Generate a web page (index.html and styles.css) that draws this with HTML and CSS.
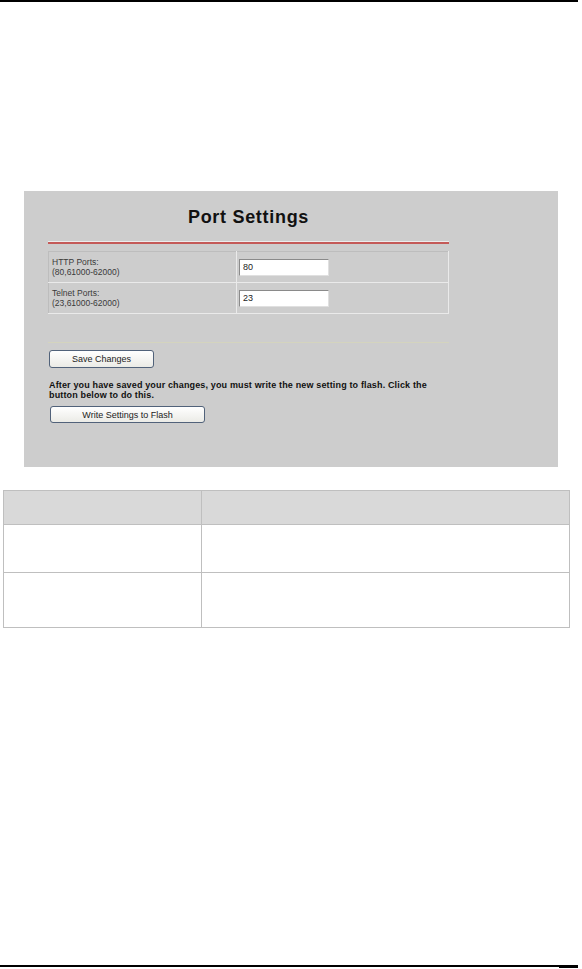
FILE: index.html
```html
<!DOCTYPE html>
<html>
<head>
    <meta charset="UTF-8">
    <meta name="viewport" content="width=device-width, initial-scale=1.0">
    <title>Port Settings</title>
    <link rel="stylesheet" href="styles.css">
</head>
<body>
    <div class="top-rule"></div>

    <div class="shot">
        <div class="panel">
            <h2 class="shot-title">Port Settings</h2>
            <div class="red-rule"></div>

            <table class="port-table">
                <tr>
                    <td class="port-label">HTTP Ports:<br>(80,61000-62000)</td>
                    <td class="port-value"><input class="port-input" type="text" value="80"></td>
                </tr>
                <tr>
                    <td class="port-label">Telnet Ports:<br>(23,61000-62000)</td>
                    <td class="port-value"><input class="port-input" type="text" value="23"></td>
                </tr>
            </table>

            <div class="thin-rule"></div>

            <button class="xp-btn save-btn" type="button">Save Changes</button>
            <p class="flash-note">After you have saved your changes, you must write the new setting to flash. Click the button below to do this.</p>
            <button class="xp-btn flash-btn" type="button">Write Settings to Flash</button>
        </div>
    </div>

    <table class="doc-table">
        <tr class="doc-head">
            <th class="doc-col1"></th>
            <th></th>
        </tr>
        <tr class="doc-row1">
            <td></td>
            <td></td>
        </tr>
        <tr class="doc-row2">
            <td></td>
            <td></td>
        </tr>
    </table>

    <div class="footer">
        <div class="page-mark"></div>
    </div>
</body>
</html>
```

FILE: styles.css
```css
html, body {
    margin: 0;
    padding: 0;
}
body {
    display: flex;
    flex-direction: column;
    height: 969px;
    font-family: "Liberation Sans", Arial, sans-serif;
    background: #ffffff;
    overflow: hidden;
}
.top-rule {
    width: 578px;
    border-top: 2px solid #000;
}

/* embedded screenshot */
.shot {
    margin: 189px 0 0 24px;
    width: 534px;
    height: 276px;
    box-sizing: border-box;
    padding: 14px 0 0 24px;
    background: #cdcdcd;
}
.panel {
    width: 401px;
}
.shot-title {
    margin: 0;
    font-size: 18px;
    line-height: 24px;
    letter-spacing: 0.7px;
    font-weight: bold;
    text-align: center;
    color: #111;
}
.red-rule {
    margin-top: 12px;
    border-top: 1px solid #ececec;
    border-bottom: 2px solid #c45a58;
}
.port-table {
    margin-top: 7px;
    width: 401px;
    border-collapse: collapse;
    border: 1px solid #e6e6e6;
}
.port-table td {
    height: 30px;
    padding: 0;
    border: 1px solid;
    border-color: #bdbdbd #eaeaea #eaeaea #bdbdbd;
    vertical-align: middle;
}
.port-label {
    width: 184px;
    padding-left: 3px !important;
    font-size: 8.5px;
    line-height: 10px;
    color: #3a3a3a;
}
.port-value {
    padding-left: 2px !important;
}
.port-input {
    display: block;
    width: 90px;
    height: 17px;
    box-sizing: border-box;
    margin: 0;
    padding: 0 3px;
    border: 1px solid #9c9c9c;
    border-color: #8a8a8a #e0e0e0 #e0e0e0 #8a8a8a;
    background: #fff;
    font-family: "Liberation Sans", Arial, sans-serif;
    font-size: 9px;
    color: #222;
}
.thin-rule {
    margin-top: 28px;
    border-top: 1px solid #d4d4be;
}
.xp-btn {
    display: block;
    box-sizing: border-box;
    padding: 0;
    border: 1px solid #51627a;
    border-radius: 3px;
    background: linear-gradient(#ffffff, #ebebe6);
    font-family: "Liberation Sans", Arial, sans-serif;
    font-size: 9px;
    color: #222;
}
.save-btn {
    margin: 7px 0 0 1px;
    width: 105px;
    height: 18px;
}
.flash-btn {
    margin: 6px 0 0 2px;
    width: 155px;
    height: 17px;
}
.flash-note {
    margin: 13px 0 0 1px;
    width: 390px;
    font-size: 9px;
    line-height: 9.5px;
    letter-spacing: 0.15px;
    font-weight: bold;
    color: #111;
}

/* document table */
.doc-table {
    margin: 23px 0 0 3px;
    width: 567px;
    border-collapse: collapse;
    border: 1px solid #bfbfbf;
}
.doc-table th,
.doc-table td {
    padding: 0;
    border: 1px solid #bfbfbf;
}
.doc-col1 {
    width: 197px;
}
.doc-head th {
    height: 33px;
    background: #d9d9d9;
}
.doc-row1 td {
    height: 47px;
}
.doc-row2 td {
    height: 54px;
}

.footer {
    margin-top: auto;
    width: 578px;
    border-top: 2px solid #000;
    margin-bottom: 1px;
}
.page-mark {
    margin-left: auto;
    width: 19px;
    height: 1px;
    background: #000;
}
```
